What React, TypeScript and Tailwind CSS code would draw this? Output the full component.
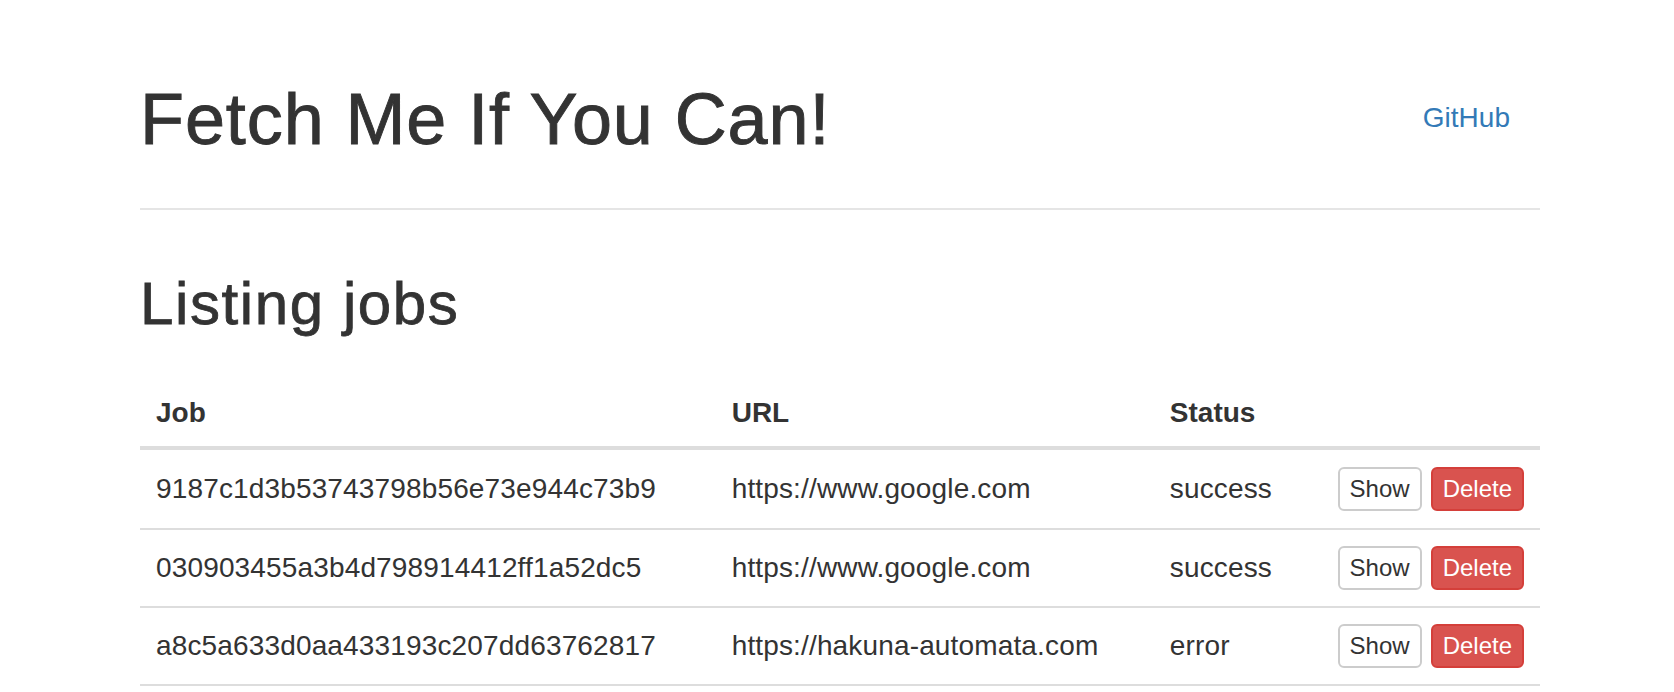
import React from 'react'

const jobs = [
  { id: '9187c1d3b53743798b56e73e944c73b9', url: 'https://www.google.com', status: 'success' },
  { id: '030903455a3b4d798914412ff1a52dc5', url: 'https://www.google.com', status: 'success' },
  { id: 'a8c5a633d0aa433193c207dd63762817', url: 'https://hakuna-automata.com', status: 'error' },
]

export default function App() {
  return (
    <div className="min-h-screen bg-white text-[#333] font-['Liberation_Sans',Arial,sans-serif]">
      <div className="ml-[140px] w-[1400px]">
        {/* page header */}
        <div className="flex justify-between items-start pt-[79px] h-[210px] border-b-2 border-[#e5e5e5]">
          <h1 className="text-[72px] leading-[80px] font-normal tracking-[0.9px] [-webkit-text-stroke:0.9px_#333]">
            Fetch Me If You Can!
          </h1>
          <a href="#" className="mt-[19px] mr-[30px] text-[28px] leading-[40px] text-[#337ab7]">GitHub</a>
        </div>

        <h2 className="mt-[61px] text-[60px] leading-[66px] font-normal tracking-[1.6px] [-webkit-text-stroke:0.8px_#333]">
          Listing jobs
        </h2>

        <table className="mt-[39px] w-full border-collapse text-[28px] leading-[40px]">
          <thead>
            <tr className="border-b-4 border-[#ddd]">
              <th className="w-[576px] h-[72px] px-4 pt-[4px] text-left font-bold align-middle">Job</th>
              <th className="w-[439px] px-4 pt-[4px] text-left font-bold align-middle">URL</th>
              <th className="w-[168px] px-4 pt-[4px] text-left font-bold align-middle">Status</th>
              <th className="px-4"></th>
            </tr>
          </thead>
          <tbody>
            {jobs.map((job, i) => (
              <tr key={job.id} className="border-b-2 border-[#ddd]">
                <td className={`px-4 ${i === 0 ? 'h-[81px]' : 'h-[78px]'} align-middle tracking-[0.15px]`}>{job.id}</td>
                <td className="px-4 align-middle tracking-[0.15px]">{job.url}</td>
                <td className="px-4 align-middle tracking-[0.15px]">{job.status}</td>
                <td className="px-4 align-middle">
                  <div className="flex gap-[9px] justify-end">
                    <button className="h-[44px] px-[10px] text-[24px] leading-[36px] bg-white border-2 border-[#ccc] rounded-[6px] text-[#333]">
                      Show
                    </button>
                    <button className="h-[44px] px-[10px] text-[24px] leading-[36px] bg-[#d9534f] border-2 border-[#d43f3a] rounded-[6px] text-white">
                      Delete
                    </button>
                  </div>
                </td>
              </tr>
            ))}
          </tbody>
        </table>
      </div>
    </div>
  )
}
